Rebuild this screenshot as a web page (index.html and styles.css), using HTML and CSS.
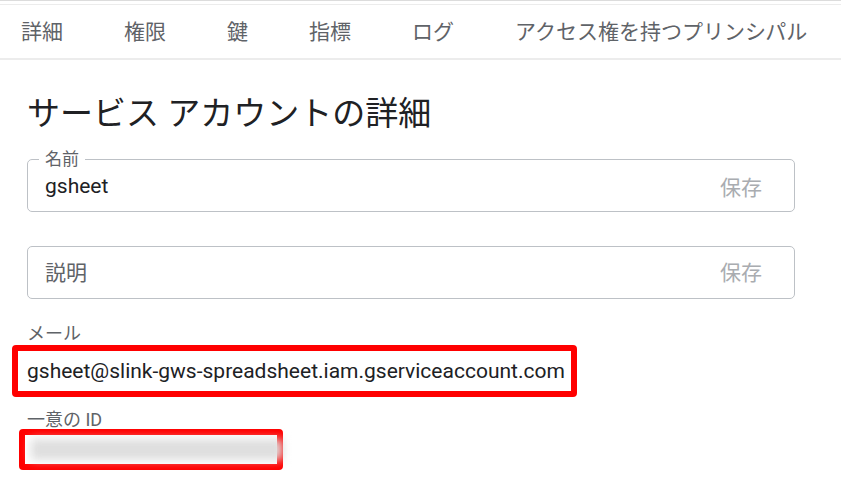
FILE: index.html
```html
<!DOCTYPE html>
<html lang="ja">
<head>
<meta charset="utf-8">
<title>サービス アカウントの詳細</title>
<link rel="stylesheet" href="styles.css">
</head>
<body>
<div class="topbar"></div>
<nav class="tabs">
  <span class="tab">詳細</span>
  <span class="tab">権限</span>
  <span class="tab">鍵</span>
  <span class="tab">指標</span>
  <span class="tab">ログ</span>
  <span class="tab">アクセス権を持つプリンシパル</span>
</nav>
<main class="content">
  <h1 class="title">サービス アカウントの詳細</h1>
  <fieldset class="field field-labeled">
    <legend class="field-label">名前</legend>
    <div class="field-row">
      <span class="field-value">gsheet</span>
      <span class="save">保存</span>
    </div>
  </fieldset>
  <div class="field field-plain">
    <div class="field-row">
      <span class="placeholder">説明</span>
      <span class="save">保存</span>
    </div>
  </div>
  <div class="info-label label-mail">メール</div>
  <div class="mark mark-mail">gsheet@slink-gws-spreadsheet.iam.gserviceaccount.com</div>
  <div class="info-label label-id">一意の ID</div>
  <div class="mark mark-id"><div class="blurred"></div></div>
</main>
</body>
</html>
```
FILE: styles.css
```css
html, body {
  margin: 0;
  padding: 0;
  background: #ffffff;
}
body {
  font-family: "Roboto", "Noto Sans CJK JP", sans-serif;
  color: #202124;
  width: 841px;
  height: 501px;
  overflow: hidden;
}
.topbar {
  height: 3px;
  border-top: 1px solid #dcdcdc;
  border-bottom: 1px solid #ececec;
}
.tabs {
  height: 53px;
  display: flex;
  align-items: center;
  padding-left: 21px;
  gap: 61px;
  border-bottom: 2px solid #ececec;
  font-size: 21px;
  color: #5f6368;
  white-space: nowrap;
}
.tab {
  line-height: 24px;
}
.content {
  padding: 0 46px 0 27px;
}
.title {
  margin: 34px 0 0 0;
  font-size: 33px;
  line-height: 40px;
  font-weight: 400;
  color: #202124;
}
.field {
  box-sizing: border-box;
  border: 1px solid #bdc1c6;
  border-radius: 5px;
}
.field-labeled {
  margin: 16px 0 0 0;
  padding: 0 32px 7px 17px;
  min-width: 0;
}
.field-label {
  font-size: 17px;
  line-height: 18px;
  color: #5f6368;
  padding: 0 6px;
  margin-left: -6px;
}
.field-row {
  display: flex;
  align-items: center;
  justify-content: space-between;
  height: 36px;
  font-size: 21px;
}
.field-plain {
  margin-top: 34px;
  height: 53px;
  padding: 0 32px 4px 17px;
  display: flex;
  flex-direction: column;
  justify-content: center;
}
.field-value {
  color: #202124;
}
.placeholder {
  color: #5f6368;
}
.save {
  color: #a9acb0;
}
.info-label {
  font-size: 18px;
  line-height: 20px;
  color: #5f6368;
}
.label-mail {
  margin-top: 25px;
}
.label-id {
  margin-top: 13px;
}
.mark {
  box-sizing: border-box;
  border: 6px solid #ff0000;
  border-radius: 4px;
}
.mark-mail {
  margin: 1px 0 0 -15px;
  width: 565px;
  height: 52px;
  padding-left: 9px;
  font-size: 21px;
  line-height: 40px;
  color: #202124;
  white-space: nowrap;
}
.mark-id {
  margin: -1px 0 0 -8px;
  width: 264px;
  height: 41px;
  padding: 4px 0 4px 6px;
}
.blurred {
  height: 21px;
  width: 252px;
  background: #dedede;
  filter: blur(5px);
}
```
